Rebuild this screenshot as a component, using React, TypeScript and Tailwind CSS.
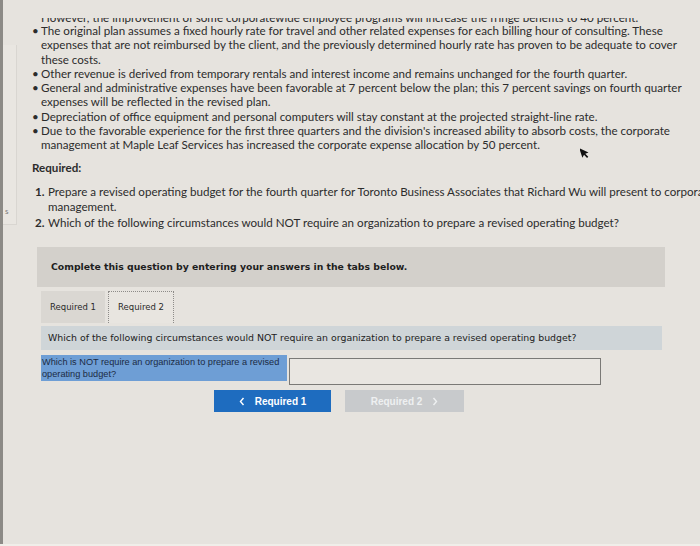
import React from "react";

const body = "font-['Lato','Open_Sans',sans-serif]";
const dv = "font-['DejaVu_Sans','Verdana',sans-serif]";
const ar = "font-['Liberation_Sans','Arial',sans-serif]";

function Bullet({ children }: { children: React.ReactNode }) {
  return (
    <li className="flex">
      <span className="w-[9px] shrink-0">•</span>
      <span>{children}</span>
    </li>
  );
}

function Chevron({ dir, color }: { dir: "left" | "right"; color: string }) {
  return (
    <svg width="6" height="9" viewBox="0 0 6 9">
      <path
        d={dir === "left" ? "M4.5 1 L1.5 4.5 L4.5 8" : "M1.5 1 L4.5 4.5 L1.5 8"}
        fill="none"
        stroke={color}
        strokeWidth="1.4"
      />
    </svg>
  );
}

export default function App() {
  return (
    <div className="relative w-[700px] h-[546px] overflow-hidden bg-[#e6e3de] flex">
      {/* left edge */}
      <div className="w-[3px] shrink-0 bg-[#8c8a86]" />
      <div className="w-[14px] shrink-0 flex flex-col">
        <div className="h-[45px]" />
        <div className="h-[180px] border-r border-b border-[#d9d6d1] bg-[#e9e6e1] flex flex-col justify-end">
          <span className={`${body} text-[8px] text-[#777] pl-[2px] pb-[9px] leading-[8px]`}>s</span>
        </div>
      </div>

      {/* main */}
      <div className={`${body} flex-1 pl-[15px] text-[#2c2c2c] text-[11.6px]`}>
        <div className="mt-[18px] ml-[9px] h-[6px] overflow-hidden flex flex-col justify-end">
          <div className="leading-[14.3px] whitespace-nowrap shrink-0 translate-y-[1px]">
            However, the improvement of some corporatewide employee programs will increase the fringe benefits to 40 percent.
          </div>
        </div>
        <ul className="leading-[14.3px] whitespace-nowrap">
          <Bullet>
            The original plan assumes a fixed hourly rate for travel and other related expenses for each billing hour of consulting. These
            <br />
            expenses that are not reimbursed by the client, and the previously determined hourly rate has proven to be adequate to cover
            <br />
            these costs.
          </Bullet>
          <Bullet>Other revenue is derived from temporary rentals and interest income and remains unchanged for the fourth quarter.</Bullet>
          <Bullet>
            General and administrative expenses have been favorable at 7 percent below the plan; this 7 percent savings on fourth quarter
            <br />
            expenses will be reflected in the revised plan.
          </Bullet>
          <Bullet>Depreciation of office equipment and personal computers will stay constant at the projected straight-line rate.</Bullet>
          <Bullet>
            Due to the favorable experience for the first three quarters and the division's increased ability to absorb costs, the corporate
            <br />
            management at Maple Leaf Services has increased the corporate expense allocation by 50 percent.
          </Bullet>
        </ul>

        <div className="mt-[8px] font-bold leading-[14px]">Required:</div>

        <ol className="mt-[9px] pl-[3px] leading-[15.5px] whitespace-nowrap">
          <li className="flex">
            <span className="w-[13px] shrink-0 font-bold">1.</span>
            <span>
              Prepare a revised operating budget for the fourth quarter for Toronto Business Associates that Richard Wu will present to corporate
              <br />
              management.
            </span>
          </li>
          <li className="flex">
            <span className="w-[13px] shrink-0 font-bold">2.</span>
            <span>Which of the following circumstances would NOT require an organization to prepare a revised operating budget?</span>
          </li>
        </ol>

        {/* question widget */}
        <div className="mt-[17px] ml-[5px] w-[628px]">
          <div className={`${dv} h-[40px] bg-[#d3d0cb] flex items-center pl-[14px] text-[9.3px] font-bold text-[#1e1e1e]`}>
            Complete this question by entering your answers in the tabs below.
          </div>

          <div className="mt-[4px] pl-[4px] flex gap-[3px] h-[32px] items-stretch">
            <div className={`${dv} w-[64px] bg-[#dad7d2] flex items-center justify-center text-[8.5px] text-[#2a2a2a]`}>
              Required 1
            </div>
            <div className={`${dv} w-[66px] border-x border-t border-dotted border-[#8d8b88] bg-[#e8e5e0] flex items-center justify-center text-[8.5px] text-[#2a2a2a]`}>
              Required 2
            </div>
          </div>

          <div className="ml-[4px] w-[621px] mt-[3px]">
            <div className={`${dv} h-[24px] bg-[#cfd5d8] flex items-center pl-[7px] text-[9.4px] text-[#222]`}>
              Which of the following circumstances would NOT require an organization to prepare a revised operating budget?
            </div>

            <div className="mt-[5px] flex gap-[2px] items-start">
              <div className={`${ar} w-[246px] h-[26px] bg-[#6e9ed5] text-[9.2px] leading-[12px] text-[#1c2b44] pl-[1px] pt-[1px] whitespace-nowrap`}>
                Which is NOT require an organization to prepare a revised
                <br />
                operating budget?
              </div>
              <div className="mt-[3px] w-[312px] h-[27px] border border-[#7a7976] bg-[#e9e6e1]" />
            </div>

            <div className={`${ar} mt-[5px] ml-[173px] flex gap-[14px] h-[22px] text-[10px] font-bold`}>
              <div className="w-[117px] bg-[#1e6cbf] text-white flex items-center justify-center gap-[10px]">
                <Chevron dir="left" color="#ffffff" />
                <span>Required 1</span>
              </div>
              <div className="w-[119px] bg-[#c8cacc] text-[#eef0f1] flex items-center justify-center gap-[10px]">
                <span>Required 2</span>
                <Chevron dir="right" color="#eef0f1" />
              </div>
            </div>
          </div>
        </div>
      </div>

      {/* mouse cursor */}
      <svg className="absolute left-[580px] top-[146px]" width="10" height="14" viewBox="0 0 10 14">
        <path d="M1 1 L1 11 L3.5 8.6 L5.4 12.6 L6.9 11.9 L5 8 L8.4 8 Z" fill="#111" transform="rotate(-18 4 7)" />
      </svg>

      <div className="absolute left-0 bottom-0 w-full h-[2px] bg-[#f0eee9]" />
    </div>
  );
}
